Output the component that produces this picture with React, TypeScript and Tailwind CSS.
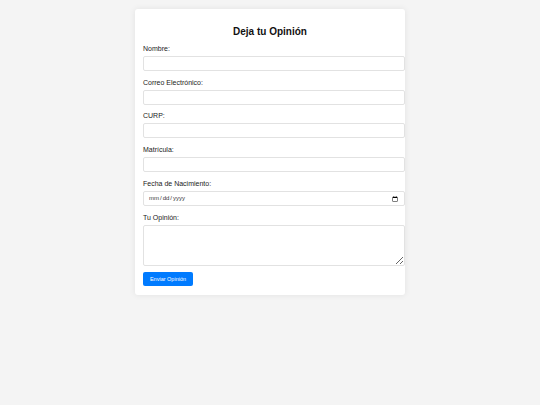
const fields = [
  { id: 'nombre', label: 'Nombre:', type: 'text' },
  { id: 'correo', label: 'Correo Electrónico:', type: 'email' },
  { id: 'curp', label: 'CURP:', type: 'text' },
  { id: 'matricula', label: 'Matrícula:', type: 'text' },
  { id: 'fecha', label: 'Fecha de Nacimiento:', type: 'date' },
] as const;

export default function App() {
  return (
    <div className="min-h-[405px] bg-[#f4f4f4] pt-[9px] font-['Liberation_Sans',Arial,sans-serif] text-[#222]">
      <form className="mx-auto w-[270px] rounded-[3px] bg-white px-2 pb-[9px] pt-[16px] shadow-[0_0_6px_rgba(0,0,0,0.08)]">
        <h2 className="mb-[6px] text-center text-[10px] font-bold leading-[13px] text-[#111]">
          Deja tu Opinión
        </h2>

        {fields.map((f, i) => (
          <div key={f.id} className={i === 1 ? 'mb-[6px]' : 'mb-[7px]'}>
            <label htmlFor={f.id} className="mb-[2px] block text-[7px] leading-[10px] text-[#222]">
              {f.label}
            </label>
            <input
              id={f.id}
              type={f.type}
              className="box-border block h-[15px] w-[calc(100%+8px)] rounded-[2px] border border-[#e2e2e2] bg-white px-[4px] text-[6px] text-[#333] outline-none"
            />
          </div>
        ))}

        <div className="mb-[6px]">
          <label htmlFor="opinion" className="mb-[2px] block text-[7px] leading-[10px] text-[#222]">
            Tu Opinión:
          </label>
          <textarea
            id="opinion"
            className="box-border block h-[41px] w-[calc(100%+8px)] rounded-[2px] border border-[#e2e2e2] bg-white px-[4px] text-[6px] outline-none"
          />
        </div>

        <button
          type="button"
          className="block h-[14px] w-[50px] rounded-[2px] bg-[#007bff] text-[5.5px] leading-[14px] text-white"
        >
          Enviar Opinión
        </button>
      </form>
    </div>
  );
}
